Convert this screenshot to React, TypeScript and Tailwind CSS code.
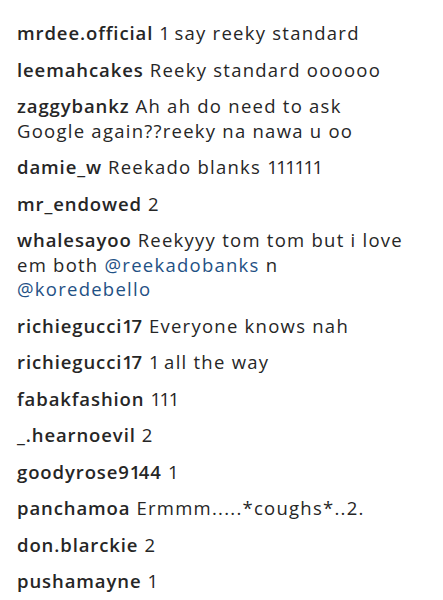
import React from "react";

type Part = { t: string; link?: boolean; user?: boolean };
type Row = Part[][];

const rows: Row[] = [
  [[{ t: "mrdee.official", user: true }, { t: " 1 say reeky standard" }]],
  [[{ t: "leemahcakes", user: true }, { t: " Reeky standard oooooo" }]],
  [
    [{ t: "zaggybankz", user: true }, { t: " Ah ah do need to ask" }],
    [{ t: "Google again??reeky na nawa u oo" }],
  ],
  [[{ t: "damie_w", user: true }, { t: " Reekado blanks 111111" }]],
  [[{ t: "mr_endowed", user: true }, { t: " 2" }]],
  [
    [{ t: "whalesayoo", user: true }, { t: " Reekyyy tom tom but i love" }],
    [{ t: "em both " }, { t: "@reekadobanks", link: true }, { t: " n" }],
    [{ t: "@koredebello", link: true }],
  ],
  [[{ t: "richiegucci17", user: true }, { t: " Everyone knows nah" }]],
  [[{ t: "richiegucci17", user: true }, { t: " 1 all the way" }]],
  [[{ t: "fabakfashion", user: true }, { t: " 111" }]],
  [[{ t: "_.hearnoevil", user: true }, { t: " 2" }]],
  [[{ t: "goodyrose9144", user: true }, { t: " 1" }]],
  [[{ t: "panchamoa", user: true }, { t: " Ermmm.....*coughs*..2." }]],
  [[{ t: "don.blarckie", user: true }, { t: " 2" }]],
  [[{ t: "pushamayne", user: true }, { t: " 1" }]],
];

function Txt({ t }: { t: string }) {
  const bits = t.split(/(1+)/);
  return (
    <>
      {bits.map((b, i) =>
        /^1+$/.test(b) ? (
          <span key={i} className="tracking-[-1.5px]">
            {b}
          </span>
        ) : (
          <React.Fragment key={i}>{b}</React.Fragment>
        )
      )}
    </>
  );
}

export default function App() {
  return (
    <div className="w-[443px] h-[600px] bg-white overflow-hidden">
      <ul
        className="flex flex-col gap-[12px] pl-[17px] pt-[21px] text-[18.5px] leading-[24.5px] text-[#262626] tracking-[1.25px]"
        style={{ fontFamily: "'Open Sans', sans-serif" }}
      >
        {rows.map((lines, i) => (
          <li key={i} className="flex flex-col">
            {lines.map((line, k) => (
              <span key={k} className="whitespace-pre">
                {line.map((p, j) => (
                  <span
                    key={j}
                    className={
                      p.user
                        ? "font-semibold tracking-[0.9px]"
                        : p.link
                        ? "text-[#1f5185]"
                        : ""
                    }
                  >
                    <Txt t={p.t} />
                  </span>
                ))}
              </span>
            ))}
          </li>
        ))}
      </ul>
    </div>
  );
}
